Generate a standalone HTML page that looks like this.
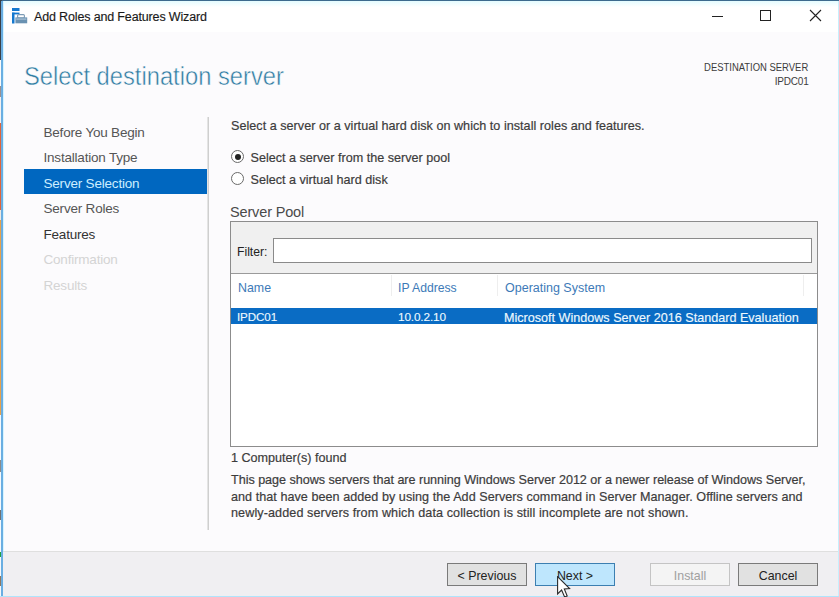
<!DOCTYPE html>
<html><head><meta charset="utf-8">
<style>
html,body{margin:0;padding:0;width:839px;height:597px;overflow:hidden;background:#fcfbfd;}
body{position:relative;font-family:"Liberation Sans",sans-serif;color:#3c3c3c;}
.a{position:absolute;white-space:nowrap;line-height:1;}
#win{position:absolute;left:0;top:0;width:839px;height:597px;background:#fcfbfd;}
#titlebar{position:absolute;left:0;top:0;width:839px;height:32px;background:#ffffff;}
.nav{font-size:13.5px;letter-spacing:-0.2px;left:43.5px;color:#555555;}
.body{font-size:12.6px;color:#3c3c3c;-webkit-text-stroke:0.2px #3c3c3c;}
.btn{position:absolute;top:563px;width:78px;height:21px;border:1px solid #7a7a7a;background:#e1e1e1;font-size:12.4px;color:#222;text-align:center;line-height:24px;}
</style></head><body>
<div id="win">
  <div id="titlebar"></div>
  <div style="position:absolute;left:0;top:1px;width:839px;height:6px;background:linear-gradient(#e4fcff,#ffffff)"></div>
  <!-- window borders -->
  <div style="position:absolute;left:0;top:0;width:839px;height:1px;background:#3d6a8e"></div>
  <div style="position:absolute;left:1px;top:0;width:1px;height:60px;background:#3a4a58"></div>
  <div style="position:absolute;left:0;top:0;width:1px;height:597px;background:linear-gradient(#3a4048 0 60px,#fafafa 60px 86px,#9a9090 86px 97px,#f4f0f0 97px 123px,#e0643a 123px 210px,#f0e8e0 210px 220px,#e8a24a 220px 415px,#f4f8fc 415px 460px,#8a8a8a 460px 472px,#f4f8fc 472px 510px,#707070 510px 520px,#f4f8fc 520px 552px,#20a040 552px 557px,#f4f8fc 557px 576px,#907860 576px 586px,#f4f8fc 586px)"></div>
  <div style="position:absolute;left:1px;top:1px;width:2px;height:596px;background:#6aaee2"></div>
  <div style="position:absolute;left:3px;top:1px;width:1px;height:595px;background:#d8f4ff"></div>
  <div style="position:absolute;left:838px;top:1px;width:1px;height:596px;background:#c8eefc"></div>
  <div style="position:absolute;left:3px;top:595px;width:835px;height:1px;background:#d6f2fd"></div>
  <div style="position:absolute;left:0;top:596px;width:839px;height:1px;background:#b0e4fc"></div>

  <!-- title icon -->
  <svg style="position:absolute;left:0;top:0" width="30" height="30" viewBox="0 0 30 30">
    <rect x="12" y="8" width="7.5" height="3" fill="#1579cf"/>
    <rect x="12" y="12.6" width="7.5" height="1.8" fill="#1579cf"/>
    <rect x="12" y="12.6" width="2.5" height="10.9" fill="#1579cf"/>
    <rect x="17.6" y="14.6" width="6.8" height="3.4" rx="1" fill="#ffffff" stroke="#7d9cb6" stroke-width="1.1"/>
    <rect x="15.4" y="17.4" width="11.8" height="5.9" fill="#6a92b2"/>
    <rect x="16.2" y="18.6" width="10.2" height="0.9" fill="#c4d6e4"/>
  </svg>
  <div class="a" style="left:34px;top:10.5px;font-size:12.5px;letter-spacing:-0.15px;color:#1a1a1a;-webkit-text-stroke:0.15px #1a1a1a">Add Roles and Features Wizard</div>

  <!-- window controls -->
  <div style="position:absolute;left:712px;top:16px;width:11px;height:1px;background:#222"></div>
  <div style="position:absolute;left:760px;top:10px;width:9px;height:9px;border:1px solid #222"></div>
  <svg style="position:absolute;left:809px;top:9px" width="13" height="13" viewBox="0 0 13 13"><path d="M1 1L12 12M12 1L1 12" stroke="#222" stroke-width="1.1"/></svg>

  <!-- header -->
  <div class="a" style="left:23.5px;top:63px;font-size:26px;transform:scaleX(0.913);transform-origin:0 0;color:#2f7ca2;-webkit-text-stroke:0.5px #fcfbfd">Select destination server</div>
  <div class="a" style="right:30.5px;top:63px;font-size:10px;transform:scaleX(0.945);transform-origin:100% 0;color:#3c3c3c;text-align:right">DESTINATION SERVER</div>
  <div class="a" style="right:30.5px;top:77px;font-size:10px;letter-spacing:-0.2px;color:#3c3c3c;text-align:right">IPDC01</div>

  <!-- nav -->
  <div style="position:absolute;left:24px;top:169px;width:183px;height:25px;background:#0067c0"></div>
  <div class="a nav" style="top:125.5px">Before You Begin</div>
  <div class="a nav" style="top:150.5px">Installation Type</div>
  <div class="a nav" style="top:176.5px;color:#cdeeff">Server Selection</div>
  <div class="a nav" style="top:201.5px">Server Roles</div>
  <div class="a nav" style="top:227.5px;color:#333">Features</div>
  <div class="a nav" style="top:252.5px;color:#d4d4d4">Confirmation</div>
  <div class="a nav" style="top:278.5px;color:#d4d4d4">Results</div>
  <div style="position:absolute;left:207px;top:117px;width:1px;height:413px;background:#e4e4e4"></div><div style="position:absolute;left:208px;top:117px;width:1px;height:413px;background:#cfcfcf"></div>

  <!-- content -->
  <div class="a body" style="left:231px;top:120px;letter-spacing:0.026px">Select a server or a virtual hard disk on which to install roles and features.</div>
  <div style="position:absolute;left:231px;top:150px;width:11px;height:11px;border:1px solid #6a6a6a;border-radius:50%;background:#fff"></div>
  <div style="position:absolute;left:234.5px;top:153.5px;width:6px;height:6px;border-radius:50%;background:#222"></div>
  <div class="a body" style="left:250.5px;top:152px">Select a server from the server pool</div>
  <div style="position:absolute;left:231px;top:172px;width:11px;height:11px;border:1px solid #6a6a6a;border-radius:50%;background:#fff"></div>
  <div class="a body" style="left:250.5px;top:173.5px">Select a virtual hard disk</div>

  <div class="a" style="left:230px;top:204.5px;font-size:14.5px;letter-spacing:-0.15px;color:#4a4a4a">Server Pool</div>

  <!-- pool box -->
  <div style="position:absolute;left:230px;top:221px;width:586px;height:224px;border:1px solid #8c8c8c;background:#fff"></div>
  <div style="position:absolute;left:231px;top:222px;width:586px;height:51px;background:#f0f0f0;border-bottom:1px solid #9a9a9a"></div>
  <div class="a" style="left:237px;top:245.5px;font-size:12.2px;color:#222">Filter:</div>
  <div style="position:absolute;left:273px;top:238px;width:537px;height:23px;border:1px solid #8a8a8a;background:#fff"></div>

  <div class="a" style="left:238px;top:282px;font-size:12.4px;color:#3d7ab8">Name</div>
  <div class="a" style="left:398px;top:282px;font-size:12.2px;color:#3d7ab8">IP Address</div>
  <div class="a" style="left:505px;top:282px;font-size:12.5px;color:#3d7ab8">Operating System</div>
  <div style="position:absolute;left:391px;top:275px;width:1px;height:21px;background:#eeeeee"></div>
  <div style="position:absolute;left:497px;top:275px;width:1px;height:21px;background:#eeeeee"></div>
  <div style="position:absolute;left:803px;top:275px;width:1px;height:21px;background:#eeeeee"></div>

  <div style="position:absolute;left:231px;top:308px;width:586px;height:16px;background:#0a6cc4"></div>
  <div class="a" style="left:237px;top:310.8px;font-size:11.6px;letter-spacing:-0.1px;color:#eef9ff;-webkit-text-stroke:0.12px #eef9ff">IPDC01</div>
  <div class="a" style="left:398px;top:311.6px;font-size:11.8px;letter-spacing:-0.15px;color:#eef9ff;-webkit-text-stroke:0.12px #eef9ff">10.0.2.10</div>
  <div class="a" style="left:504px;top:312px;font-size:12.6px;color:#eef9ff;-webkit-text-stroke:0.15px #eef9ff">Microsoft Windows Server 2016 Standard Evaluation</div>

  <div class="a body" style="left:231px;top:451.5px">1 Computer(s) found</div>
  <div class="a body" style="left:231px;top:474px;letter-spacing:-0.031px">This page shows servers that are running Windows Server 2012 or a newer release of Windows Server,</div>
  <div class="a body" style="left:231px;top:490.5px;letter-spacing:0.042px">and that have been added by using the Add Servers command in Server Manager. Offline servers and</div>
  <div class="a body" style="left:231px;top:507px;letter-spacing:0.1px">newly-added servers from which data collection is still incomplete are not shown.</div>

  <!-- footer -->
  <div style="position:absolute;left:3px;top:551px;width:835px;height:1px;background:#dfdfdf"></div>
  <div style="position:absolute;left:3px;top:552px;width:835px;height:44px;background:#f0eff2"></div>
  <div class="btn" style="left:447px">&lt; Previous</div>
  <div class="btn" style="left:535px;border-color:#3c7fb1;background:#bee6fd">Next &gt;</div>
  <div class="btn" style="left:650px;border-color:#c4c4c4;background:#f4f4f4;color:#a0a0a0">Install</div>
  <div class="btn" style="left:738px">Cancel</div>

  <!-- cursor -->
  <svg style="position:absolute;left:556.5px;top:576px" width="16" height="24" viewBox="0 0 16 24">
    <path d="M0.6 0.6 L0.6 18 L4.6 14 L7.6 21 L10.2 20 L7.3 13 L12.6 12.6 Z" fill="#fff" stroke="#2a2a2a" stroke-width="1.1" stroke-linejoin="miter"/>
  </svg>
</div>
</body></html>
